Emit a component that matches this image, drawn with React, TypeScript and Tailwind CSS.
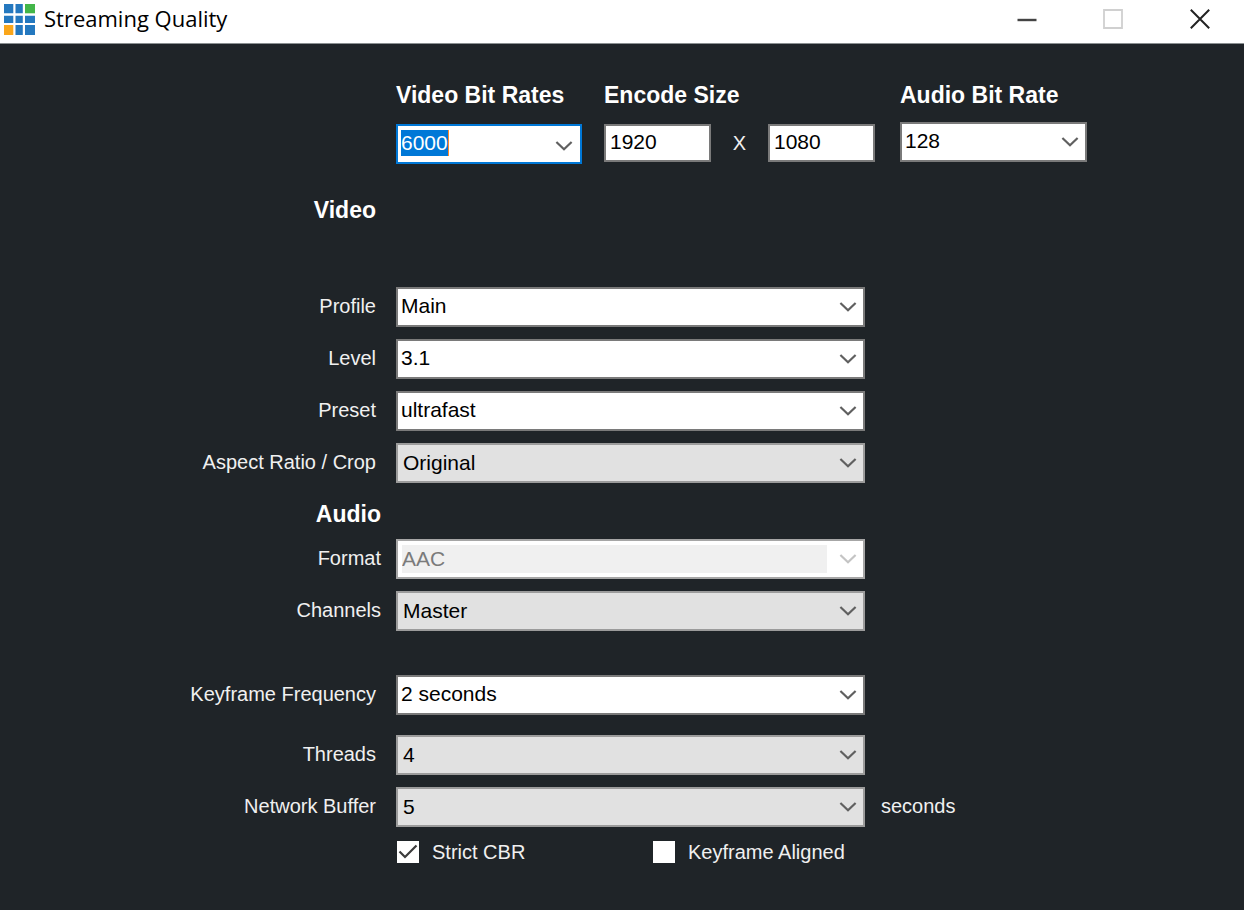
import { useEffect, useRef } from "react";
import type { ReactNode } from "react";

function Chevron({ className }: { className: string }) {
  return (
    <svg
      viewBox="0 0 18 11"
      aria-hidden="true"
      className={`pointer-events-none h-[11px] w-[18px] ${className}`}
      fill="none"
      stroke="currentColor"
      strokeWidth="2.2"
    >
      <path d="M1.4 1 L9 8.2 L16.6 1" />
    </svg>
  );
}

type SelectProps = {
  id: string;
  value: string;
  tone?: "white" | "grey" | "disabled";
};

const boxTones = {
  white: "bg-white border-[#7a7a7a]",
  grey: "bg-[#e1e1e1] border-[#9b9b9b]",
  disabled: "bg-white border-[#a6a6a6] p-[4px] pr-[36px]",
};

const textTones = {
  white: "bg-transparent pl-[3px] pb-[2px] text-black",
  grey: "bg-transparent pl-[5px] text-black",
  disabled: "bg-[#f0f0f0] pb-[2px] text-[#7b7b7b] opacity-100",
};

function Select({ id, value, tone = "white" }: SelectProps) {
  return (
    <div className={`relative flex h-10 border-2 ${boxTones[tone]}`}>
      <select
        id={id}
        disabled={tone === "disabled"}
        defaultValue={value}
        className={`w-full appearance-none rounded-none pr-8 text-[21px] outline-none ${textTones[tone]}`}
      >
        <option>{value}</option>
      </select>
      <Chevron
        className={`absolute top-[13px] right-[6px] ${tone === "disabled" ? "text-[#c4c4c4]" : "text-[#606060]"}`}
      />
    </div>
  );
}

function Row({ id, label, wide, after, children }: { id: string; label: string; wide?: boolean; after?: string; children: ReactNode }) {
  return (
    <div className="grid grid-cols-[396fr_469fr_379fr]">
      <label htmlFor={id} className={`pt-[5px] text-right ${wide ? "pr-[15px]" : "pr-5"}`}>
        {label}
      </label>
      {children}
      {after && <span className="pt-[5px] pl-4">{after}</span>}
    </div>
  );
}

function SectionTitle({ children, wide }: { children: string; wide?: boolean }) {
  return (
    <div className="grid grid-cols-[396fr_848fr]">
      <h2 className={`text-right text-[23px] font-bold text-white ${wide ? "pr-[15px]" : "pr-5"}`}>{children}</h2>
    </div>
  );
}

function BitRateCombo() {
  const ref = useRef<HTMLInputElement>(null);
  useEffect(() => {
    ref.current?.focus();
    ref.current?.select();
  }, []);
  return (
    <div className="relative flex h-10 items-start border-2 border-[#0078d7] bg-white pt-1 pl-[3px]">
      <input
        id="video-rate"
        ref={ref}
        defaultValue="6000"
        className="h-[26px] w-full min-w-0 text-[21px] leading-[26px] text-black outline-none selection:bg-[#0078d7] selection:text-white"
      />
      <span className="absolute top-1 left-[50px] h-[26px] w-px bg-[#ff8728]" />
      <button type="button" aria-label="Show bit rates" className="h-8 w-8 shrink-0">
        <Chevron className="mx-auto text-[#606060]" />
      </button>
    </div>
  );
}

function SizeInput({ id, value, label }: { id: string; value: string; label: string }) {
  return (
    <input
      id={id}
      aria-label={label}
      defaultValue={value}
      className="h-[38px] w-[107px] min-w-0 border-2 border-[#7a7a7a] bg-white pb-[2px] pl-1 text-[21px] text-black outline-none"
    />
  );
}

function CheckOption({ label, checked }: { label: string; checked?: boolean }) {
  return (
    <label className="flex items-center gap-[13px]">
      <span className="relative block size-[22px]">
        <input
          type="checkbox"
          defaultChecked={checked}
          className="peer block size-[22px] appearance-none bg-white"
        />
        <svg
          viewBox="0 0 22 22"
          aria-hidden="true"
          className="pointer-events-none absolute inset-0 hidden size-[22px] peer-checked:block"
          fill="none"
          stroke="#3c3c3c"
          strokeWidth="2.2"
        >
          <path d="M2.5 10.5 L8 16 L19.5 4.5" />
        </svg>
      </span>
      {label}
    </label>
  );
}

function TitleBar() {
  return (
    <header className="flex h-11 items-start border-b border-[#8a8f91] bg-white pl-1 text-black">
      <svg viewBox="0 0 31 31" className="mt-1 size-[31px]" fill="#2478bf" aria-hidden="true">
        <path d="M0 0h9.3v9.3H0zM11.5 0h7.3v9.3h-7.3zM0 11.8h9.3v7.2H0zM11.5 11.8h7.3v7.2h-7.3zM21 11.8h10v7.2H21zM11.5 21h7.3v10h-7.3zM21 21h10v10H21z" />
        <path d="M21 0h10v9.3H21z" fill="#43b649" />
        <path d="M0 21h9.3v10H0z" fill="#faa61a" />
      </svg>
      <h1 className="mt-[2px] ml-[9px] grow font-['Open_Sans','Noto_Sans',sans-serif] text-[22px] leading-8">
        Streaming Quality
      </h1>
      <div className="flex">
        <button type="button" aria-label="Minimize" className="flex h-10 w-[86px] items-center justify-center">
          <svg viewBox="0 0 20 20" className="size-5" stroke="#444444" strokeWidth="2.4">
            <path d="M0.5 10H19.5" />
          </svg>
        </button>
        <button type="button" aria-label="Maximize" disabled className="flex h-[38px] w-[86px] items-center justify-center">
          <svg viewBox="0 0 20 20" className="size-5" fill="none" stroke="#d0d0d0" strokeWidth="1.8">
            <path d="M1 1H19V19H1Z" />
          </svg>
        </button>
        <button type="button" aria-label="Close" className="flex h-[38px] w-[88px] items-center justify-center">
          <svg viewBox="0 0 20 20" className="size-5" stroke="#222222" strokeWidth="2">
            <path d="M0.8 0.8L19.2 19.2M19.2 0.8L0.8 19.2" />
          </svg>
        </button>
      </div>
    </header>
  );
}

export default function App() {
  return (
    <div className="flex min-h-screen flex-col bg-[#1f2428] font-['Liberation_Sans',Arial,sans-serif] text-[20px] leading-7 text-[#f0f0f0]">
      <TitleBar />
      <main className="flex flex-col pt-[37px] pb-10">
        <div className="grid grid-cols-[396fr_208fr_296fr_187fr_157fr]">
          <div className="col-start-2 pr-[22px]">
            <label htmlFor="video-rate" className="mb-[15px] block text-[23px] font-bold whitespace-nowrap text-white">
              Video Bit Rates
            </label>
            <BitRateCombo />
          </div>
          <div className="pr-[25px]">
            <label htmlFor="size-w" className="mb-[15px] block text-[23px] font-bold whitespace-nowrap text-white">
              Encode Size
            </label>
            <div className="flex items-center justify-between">
              <SizeInput id="size-w" value="1920" label="Encode width" />
              <span>X</span>
              <SizeInput id="size-h" value="1080" label="Encode height" />
            </div>
          </div>
          <div>
            <label htmlFor="audio-rate" className="mb-[13px] block text-[23px] font-bold whitespace-nowrap text-white">
              Audio Bit Rate
            </label>
            <Select id="audio-rate" value="128" />
          </div>
        </div>

        <div className="mt-8">
          <SectionTitle>Video</SectionTitle>
        </div>
        <div className="mt-[63px] flex flex-col gap-3">
          <Row id="profile" label="Profile">
            <Select id="profile" value="Main" />
          </Row>
          <Row id="level" label="Level">
            <Select id="level" value="3.1" />
          </Row>
          <Row id="preset" label="Preset">
            <Select id="preset" value="ultrafast" />
          </Row>
          <Row id="aspect" label="Aspect Ratio / Crop">
            <Select id="aspect" value="Original" tone="grey" />
          </Row>
        </div>

        <div className="mt-[17px] mb-[11px]">
          <SectionTitle wide>Audio</SectionTitle>
        </div>
        <div className="flex flex-col gap-3">
          <Row id="format" label="Format" wide>
            <Select id="format" value="AAC" tone="disabled" />
          </Row>
          <Row id="channels" label="Channels" wide>
            <Select id="channels" value="Master" tone="grey" />
          </Row>
        </div>

        <div className="mt-11">
          <Row id="keyframe" label="Keyframe Frequency">
            <Select id="keyframe" value="2 seconds" />
          </Row>
        </div>
        <div className="mt-5 flex flex-col gap-3">
          <Row id="threads" label="Threads">
            <Select id="threads" value="4" tone="grey" />
          </Row>
          <Row id="buffer" label="Network Buffer" after="seconds">
            <Select id="buffer" value="5" tone="grey" />
          </Row>
        </div>

        <div className="mt-[11px] grid grid-cols-[397fr_256fr_591fr]">
          <div className="col-start-2">
            <CheckOption label="Strict CBR" checked />
          </div>
          <CheckOption label="Keyframe Aligned" />
        </div>
      </main>
    </div>
  );
}
